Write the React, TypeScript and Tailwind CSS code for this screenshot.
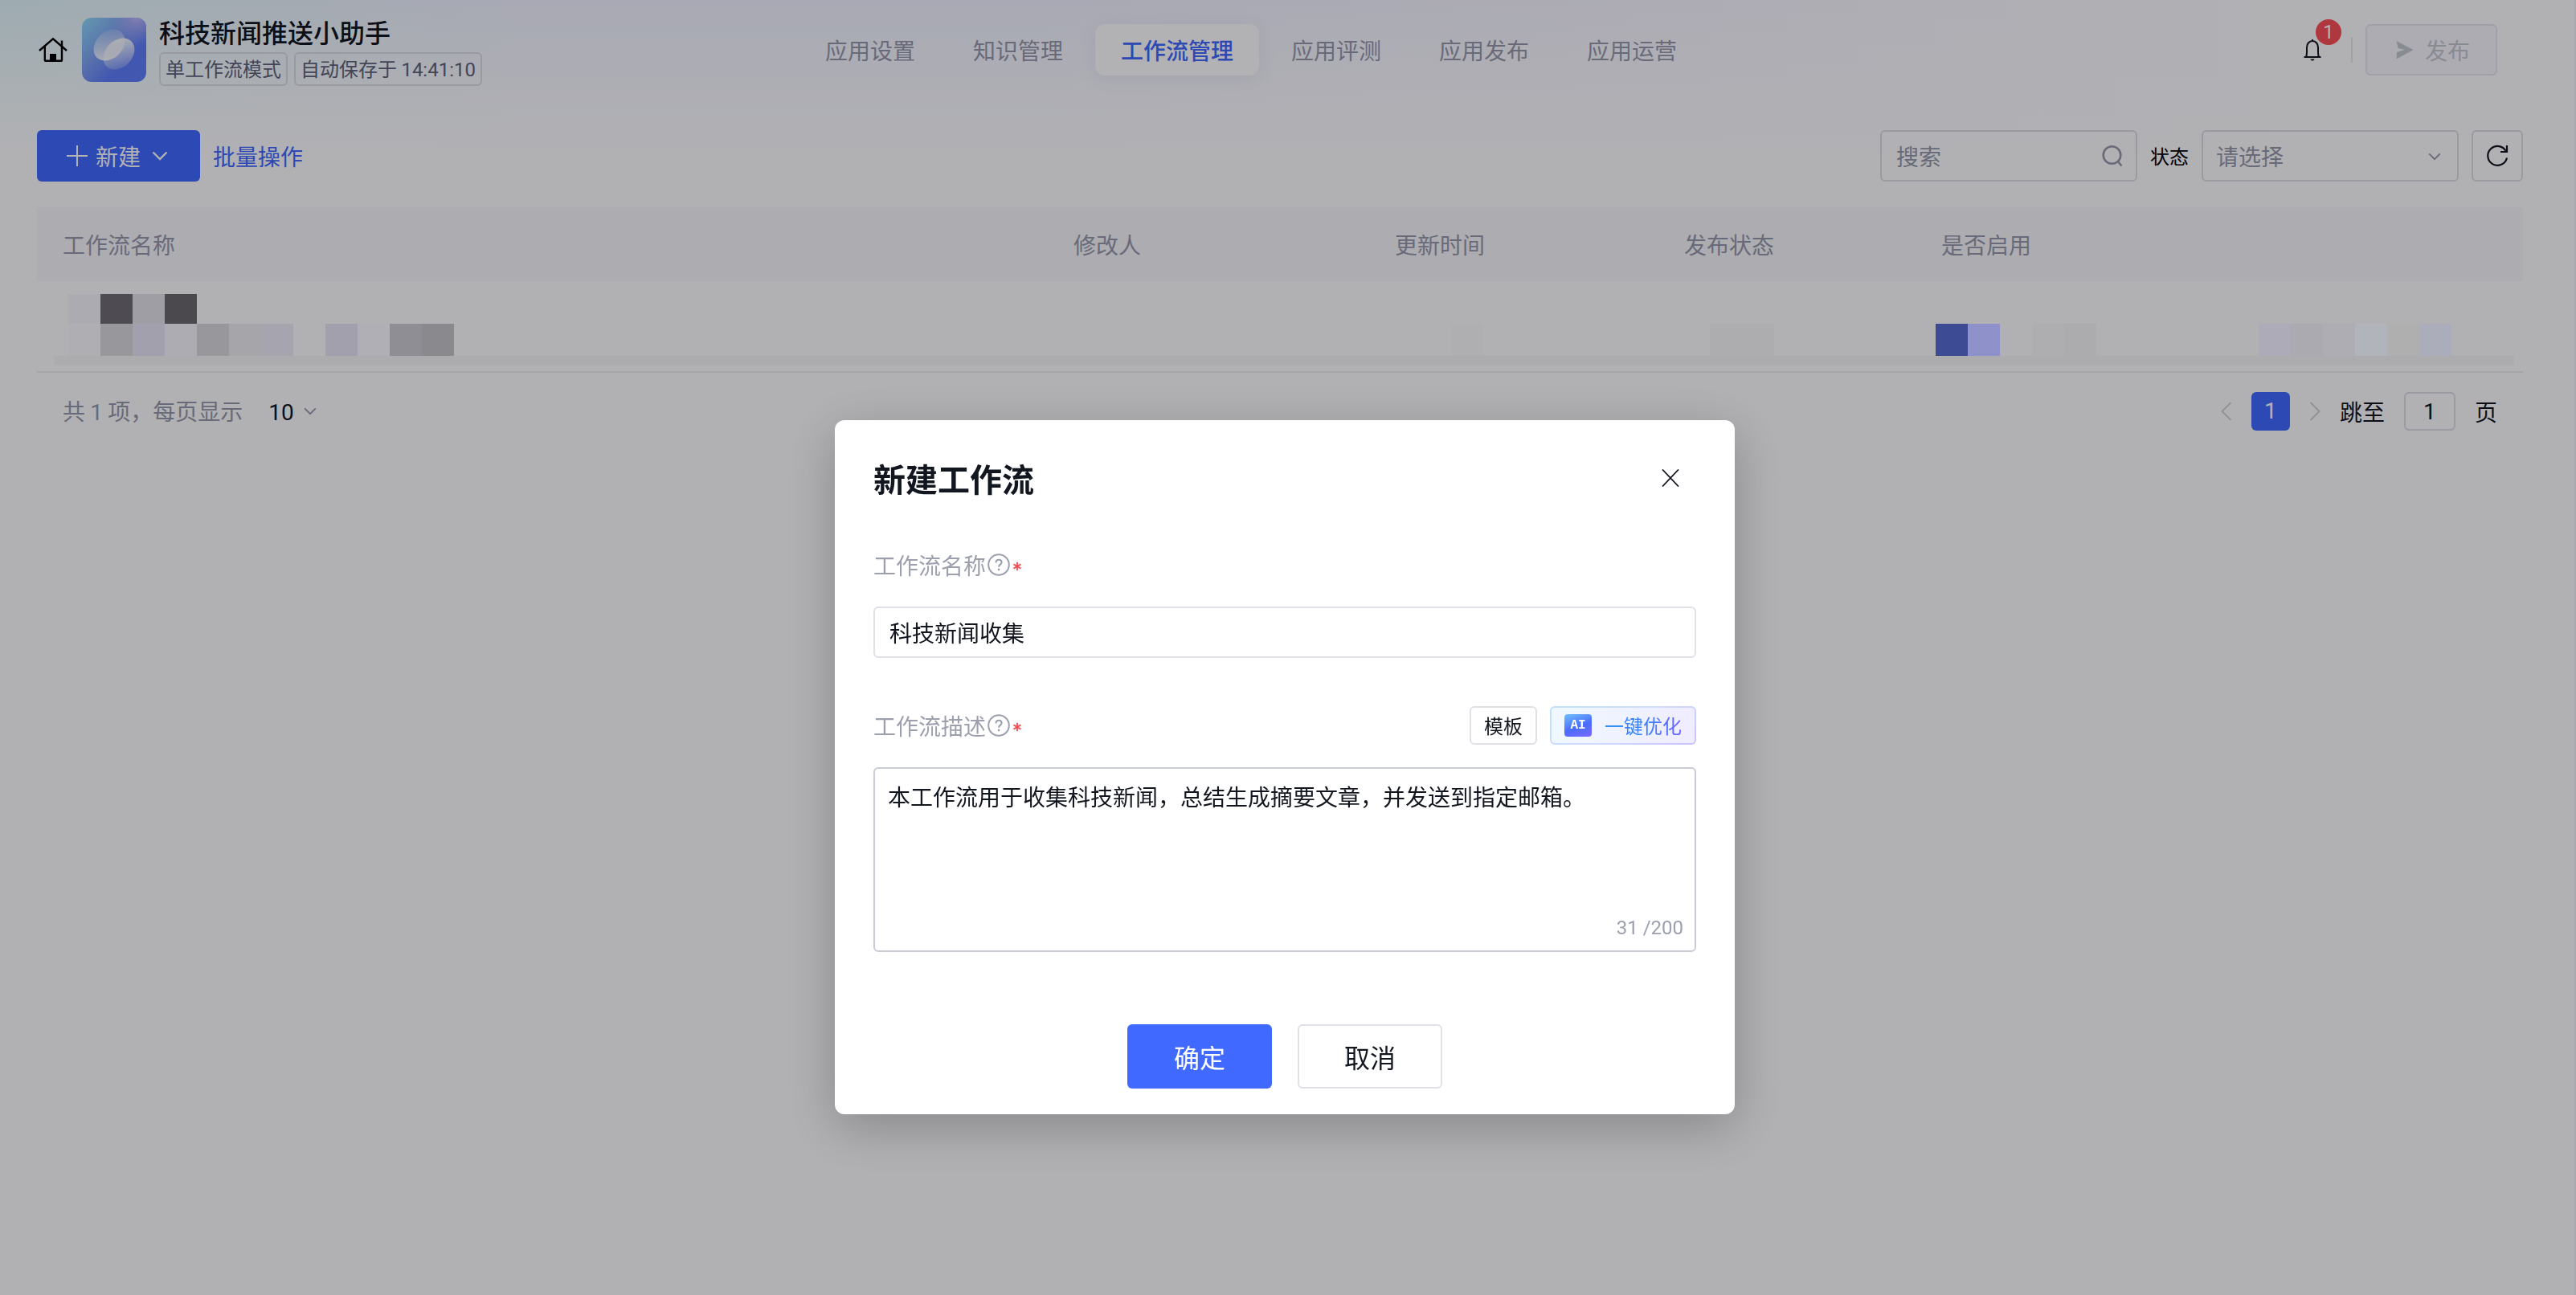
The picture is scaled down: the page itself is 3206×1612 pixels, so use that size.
import { useState } from "react"
import { clsx } from "clsx"

const TABS = ["应用设置", "知识管理", "工作流管理", "应用评测", "应用发布", "应用运营"]

function HomeIcon() {
    return (
        <svg width="36" height="32" viewBox="0 0 36 32" fill="none" stroke="currentColor" strokeWidth="2.4" aria-hidden>
            <path d="M1 17 18 2.4 35 17" />
            <path d="M7.8 12v16.4c0 .8.6 1.4 1.4 1.4h18.4c.8 0 1.4-.6 1.4-1.4V4.4" />
            <path d="M14 21h8v9h-8z" fill="currentColor" stroke="none" />
        </svg>
    )
}

function AppLogo() {
    return (
        <svg width="80" height="80" viewBox="0 0 80 80" aria-hidden>
            <defs>
                <linearGradient id="logo-base" x1="0" y1="0" x2="1" y2="1">
                    <stop offset="0" stopColor="#8fdcf8" />
                    <stop offset="0.4" stopColor="#7fa2f3" />
                    <stop offset="0.68" stopColor="#5f7dfa" />
                    <stop offset="1" stopColor="#607ffb" />
                </linearGradient>
                <radialGradient id="logo-glow" cx="0.85" cy="0" r="0.45">
                    <stop offset="0" stopColor="#c8b8f8" stopOpacity="0.9" />
                    <stop offset="1" stopColor="#8f9cf6" stopOpacity="0" />
                </radialGradient>
                <linearGradient id="logo-back" x1="1" y1="0" x2="0" y2="1">
                    <stop offset="0.1" stopColor="#fff" stopOpacity="0.12" />
                    <stop offset="0.9" stopColor="#fff" stopOpacity="0.95" />
                </linearGradient>
                <linearGradient id="logo-front" x1="1" y1="0" x2="0" y2="1">
                    <stop offset="0.1" stopColor="#fff" stopOpacity="0.95" />
                    <stop offset="0.85" stopColor="#fff" stopOpacity="0.2" />
                </linearGradient>
            </defs>
            <rect width="80" height="80" rx="12" fill="url(#logo-base)" />
            <rect width="80" height="80" rx="12" fill="url(#logo-glow)" />
            <ellipse cx="34" cy="34" rx="22" ry="16.500" transform="rotate(-45 34 34)" fill="url(#logo-back)" />
            <ellipse cx="46" cy="45" rx="22" ry="16.500" transform="rotate(-45 46 45)" fill="url(#logo-front)" />
        </svg>
    )
}

function BellIcon() {
    return (
        <svg width="24" height="28" viewBox="0 0 24 28" fill="none" stroke="currentColor" strokeWidth="2" aria-hidden>
            <path d="M1.5 23h21" />
            <path d="M4 23c.8-1.600 1-3.500 1-6.500V11c0-4.600 3-8 7-8s7 3.400 7 8v5.500c0 3 .2 4.900 1 6.500" />
            <path d="M12 3V1" />
            <path d="M9.500 25.500h5c-.4 1.400-1.300 2-2.500 2s-2.100-.6-2.500-2z" fill="currentColor" stroke="none" />
        </svg>
    )
}

function SendIcon() {
    return (
        <svg width="22" height="24" viewBox="0 0 22 24" aria-hidden>
            <path d="M.5 1 21.500 12 .5 23.500l.5-8.500L11 12 2.500 10z" fill="currentColor" />
        </svg>
    )
}

function Chevron({ className }: { className?: string }) {
    return (
        <svg viewBox="0 0 20 12" fill="none" stroke="currentColor" strokeWidth="2.4" className={className} aria-hidden>
            <path d="m1.500 1.500 8.500 8.500 8.500-8.500" />
        </svg>
    )
}

function PageArrow({ flip }: { flip?: boolean }) {
    return (
        <svg width="14" height="24" viewBox="0 0 14 24" fill="none" stroke="currentColor" strokeWidth="2" className={clsx(flip && "-scale-x-100")} aria-hidden>
            <path d="M12.500 1 1.500 12l11 11" />
        </svg>
    )
}

function HelpIcon() {
    return (
        <svg width="28" height="32" viewBox="0 0 28 32" fill="none" stroke="currentColor" strokeWidth="2" className="ml-0.5" aria-hidden>
            <circle cx="14" cy="16" r="12.800" />
            <path d="M10.500 13.500c0-2.200 1.500-3.700 3.600-3.700s3.500 1.300 3.500 3.200c0 2.600-3.500 2.700-3.500 5.700" />
            <circle cx="14.100" cy="22" r="1.400" fill="currentColor" stroke="none" />
        </svg>
    )
}

function RequiredMark() {
    return (
        <svg width="10" height="12" viewBox="0 0 10 12" stroke="#f24f55" strokeWidth="1.800" className="ml-1 mt-1" aria-hidden>
            <path d="M5 .8v10.400M.5 3.400l9 5.200M.5 8.600l9-5.200" />
        </svg>
    )
}

// Masked cell content, kept above the dialog backdrop
function Mosaic({ colors, tall }: { colors: string[]; tall?: boolean }) {
    return (
        <div className="relative z-20 flex">
            {colors.map((c, i) => (
                <span key={i} className={clsx("w-10 shrink-0", tall ? "h-10" : "h-[37px]", c)} />
            ))}
        </div>
    )
}

function Header() {
    return (
        <header className="flex h-[124px] items-center pl-12 pr-24">
            <div className="flex flex-1 items-center">
                <a href="#" aria-label="首页" className="text-black">
                    <HomeIcon />
                </a>
                <span className="ml-[18px]">
                    <AppLogo />
                </span>
                <div className="ml-4">
                    <h1 className="text-[32px] font-medium leading-[44px]">科技新闻推送小助手</h1>
                    <div className="mt-1 flex gap-2 text-2xl leading-9 text-[#60647a]">
                        <span className="rounded-md border-2 border-[#dcdde4] px-1.5">单工作流模式</span>
                        <span className="rounded-md border-2 border-[#dcdde4] px-1.5">
                            自动保存于 <time className="font-[Roboto,sans-serif]">14:41:10</time>
                        </span>
                    </div>
                </div>
            </div>

            <nav className="mr-[42px] flex gap-2">
                {TABS.map((tab) => (
                    <a
                        key={tab}
                        href="#"
                        aria-current={tab === "工作流管理" ? "page" : undefined}
                        className={clsx(
                            "rounded-xl px-8 leading-[64px]",
                            tab === "工作流管理"
                                ? "bg-white font-medium text-[#4069ff] shadow-[0_4px_24px_rgba(60,60,140,0.08)]"
                                : "text-[#9799ab]"
                        )}
                    >
                        {tab}
                    </a>
                ))}
            </nav>

            <div className="flex flex-1 items-center justify-end">
                <button type="button" aria-label="通知" className="relative">
                    <BellIcon />
                    <span className="absolute -top-6 left-4 size-8 rounded-full bg-[#fb4f57] text-center font-[Roboto,sans-serif] text-2xl leading-8 text-white">1</span>
                </button>
                <span className="ml-9 mr-4 h-8 w-0.5 bg-[#e6e6ec]" />
                <button type="button" disabled className="flex h-16 w-[164px] items-center justify-center gap-3.5 rounded-md border-2 border-[#e6e5ee] bg-[#f7f6fd] pl-1 text-[#c4c7d0]">
                    <SendIcon />
                    发布
                </button>
            </div>
        </header>
    )
}

function Toolbar() {
    return (
        <div className="flex items-center justify-between">
            <div className="flex items-center gap-4">
                <button type="button" className="flex h-16 items-center rounded-md bg-[#4069ff] pl-[37px] pr-10 text-white">
                    <svg width="26" height="28" viewBox="0 0 26 28" stroke="currentColor" strokeWidth="2" aria-hidden>
                        <path d="M0 14h26M13 1v26" />
                    </svg>
                    <span className="ml-2.5">新建</span>
                    <Chevron className="ml-3.5 h-3 w-5" />
                </button>
                <button type="button" className="text-[#4069ff]">批量操作</button>
            </div>

            <div className="flex items-center gap-4">
                <div className="relative">
                    <input
                        type="search"
                        aria-label="搜索"
                        placeholder="搜索"
                        className="h-16 w-80 rounded-md border-2 border-[#dcdde6] pl-[18px] pr-16 placeholder:text-[#9799ab]"
                    />
                    <svg width="26" height="28" viewBox="0 0 26 28" fill="none" stroke="currentColor" strokeWidth="2.600" className="absolute right-[18px] top-[18px] text-[#9799ab]" aria-hidden>
                        <circle cx="12.500" cy="13" r="10.800" />
                        <path d="m19.500 20.500 5 6" />
                    </svg>
                </div>
                <label htmlFor="status" className="text-2xl text-black">状态</label>
                <div className="relative">
                    <select id="status" defaultValue="" className="h-16 w-80 appearance-none rounded-md border-2 border-[#dcdde6] px-4 text-[#9799ab]">
                        <option value="">请选择</option>
                        <option value="published">已发布</option>
                    </select>
                    <Chevron className="pointer-events-none absolute right-[22px] top-7 h-[10px] w-4 text-[#9799ab]" />
                </div>
                <button type="button" aria-label="刷新" className="flex size-16 items-center justify-center rounded-md border-2 border-[#dcdde6]">
                    <svg width="28" height="28" viewBox="0 0 28 28" fill="none" stroke="currentColor" strokeWidth="2.200" aria-hidden>
                        <path d="M26 16.500A12 12 0 1 1 25 8.500" />
                        <path d="M26 1v8h-8" />
                    </svg>
                </button>
            </div>
        </div>
    )
}

function WorkflowTable() {
    return (
        <table className="mt-8 w-full table-fixed border-collapse text-left">
            <thead>
                <tr className="h-[92px] bg-[#f6f7fb] text-[#9799ab]">
                    <th className="pl-8 font-normal">工作流名称</th>
                    <th className="w-[400px] pl-8 font-normal">修改人</th>
                    <th className="w-[360px] pl-8 font-normal">更新时间</th>
                    <th className="w-[320px] pl-8 font-normal">发布状态</th>
                    <th className="w-[320px] pl-8 font-normal">是否启用</th>
                    <th className="w-[436px]" aria-label="操作" />
                </tr>
            </thead>
            <tbody>
                <tr className="h-[93px] align-bottom">
                    <td className="pl-[39px]">
                        <Mosaic colors={["bg-[#acabb2]", "bg-[#4e4c52]", "bg-[#9f9ea4]", "bg-[#4b494e]"]} />
                        <Mosaic
                            tall
                            colors={[
                                "bg-[#afaeb3]", "bg-[#98979c]", "bg-[#a1a0ac]", "bg-[#acacb2]", "bg-[#98979c]", "bg-[#a5a5aa]", "bg-[#a5a4af]",
                                "bg-transparent", "bg-[#a1a0ac]", "bg-[#b0afb6]", "bg-[#8f8e94]", "bg-[#8a898d]",
                            ]}
                        />
                    </td>
                    <td />
                    <td className="pl-[102px]">
                        <Mosaic tall colors={["bg-[#afafb1]"]} />
                    </td>
                    <td className="pl-16">
                        <Mosaic tall colors={["bg-[#adadaf]", "bg-[#adadaf]"]} />
                    </td>
                    <td className="pl-[25px]">
                        <Mosaic tall colors={["bg-[#3c4b94]", "bg-[#8f92ca]", "bg-[#b1b1b3]", "bg-[#aeaeb0]", "bg-[#acacae]"]} />
                    </td>
                    <td className="pl-[107px]">
                        <Mosaic tall colors={["bg-[#adabb8]", "bg-[#abaab0]", "bg-[#aeadb4]", "bg-[#b2b4bb]", "bg-[#afafaf]", "bg-[#abaeba]"]} />
                    </td>
                </tr>
                <tr className="border-b-2 border-[#ececee]">
                    <td colSpan={6} className="pb-2 pl-[21px] pr-[11px]">
                        <div className="h-[11px] bg-[#f7f7f8]" />
                    </td>
                </tr>
            </tbody>
        </table>
    )
}

function Pagination() {
    return (
        <div className="mt-6 flex h-12 items-center justify-between px-8">
            <div className="flex items-center text-[#9799ab]">
                <label htmlFor="page-size">
                    共 <span className="font-[Roboto,sans-serif]">1</span> 项，每页显示
                </label>
                <div className="relative ml-8">
                    <select id="page-size" defaultValue="10" className="w-16 appearance-none font-[Roboto,sans-serif] text-[#12161f]">
                        <option value="10">10</option>
                        <option value="20">20</option>
                    </select>
                    <Chevron className="pointer-events-none absolute right-1 top-4 h-[10px] w-4" />
                </div>
            </div>

            <div className="flex items-center">
                <button type="button" aria-label="上一页" className="text-[#d0d0d8]">
                    <PageArrow />
                </button>
                <button type="button" aria-current="page" className="ml-6 size-12 rounded-md bg-[#4069ff] font-[Roboto,sans-serif] text-white">1</button>
                <button type="button" aria-label="下一页" className="ml-6 text-[#d0d0d8]">
                    <PageArrow flip />
                </button>
                <label htmlFor="page-jump" className="ml-6">跳至</label>
                <input id="page-jump" type="text" defaultValue="1" className="mx-6 h-12 w-16 rounded-md border-2 border-[#dcdde6] text-center font-[Roboto,sans-serif]" />
                <span>页</span>
            </div>
        </div>
    )
}

function CreateDialog() {
    const [name, setName] = useState("科技新闻收集")
    const [desc, setDesc] = useState("本工作流用于收集科技新闻，总结生成摘要文章，并发送到指定邮箱。")

    return (
        <div className="fixed inset-0 z-10 flex items-start justify-center bg-[rgba(0,0,6,0.3)] pr-2 pt-[523px]">
            <form
                role="dialog"
                aria-modal="true"
                aria-labelledby="dialog-title"
                onSubmit={(e) => e.preventDefault()}
                className="w-[1120px] rounded-xl bg-white px-12 pb-8 pt-10 shadow-[0_16px_64px_rgba(0,0,0,0.24)]"
            >
                <div className="flex items-center justify-between">
                    <h2 id="dialog-title" className="text-[40px] font-bold leading-[64px]">新建工作流</h2>
                    <button type="button" aria-label="关闭" className="flex size-16 items-center justify-center">
                        <svg width="22" height="22" viewBox="0 0 22 22" stroke="currentColor" strokeWidth="1.800" aria-hidden>
                            <path d="m1 0.500 20 21M21 0.500l-20 21" />
                        </svg>
                    </button>
                </div>

                <div className="mt-[52px] flex h-12 items-center text-[#9c9fae]">
                    <label htmlFor="wf-name">工作流名称</label>
                    <HelpIcon />
                    <RequiredMark />
                </div>
                <input
                    id="wf-name"
                    type="text"
                    required
                    value={name}
                    onChange={(e) => setName(e.target.value)}
                    className="mt-7 h-16 w-full rounded-md border-2 border-[#e0e1e6] px-[18px]"
                />

                <div className="mt-[60px] flex h-12 items-center text-[#9c9fae]">
                    <label htmlFor="wf-desc">工作流描述</label>
                    <HelpIcon />
                    <RequiredMark />
                    <button type="button" className="ml-auto h-12 rounded-md border-2 border-[#e0e1e6] px-4 text-2xl text-[#12161f]">模板</button>
                    <button
                        type="button"
                        className="ml-4 flex h-12 items-center gap-4 rounded-md border-2 border-transparent px-4 text-2xl [background:linear-gradient(100deg,#f0f8ff,#efecff)_padding-box,linear-gradient(150deg,#bfe0ff,#cfdcff_50%,#c9c2ff)_border-box]"
                    >
                        <span className="flex h-7 w-[34px] items-center justify-center rounded bg-[linear-gradient(160deg,#6fc0ff,#4a6cff_55%,#7a6bff)] font-['Liberation_Mono',monospace] text-base font-bold text-white">
                            AI
                        </span>
                        <span className="bg-[linear-gradient(90deg,#2b8dff,#3f7bff_60%,#6a62ff)] bg-clip-text text-transparent">一键优化</span>
                    </button>
                </div>
                <div className="relative mt-7">
                    <textarea
                        id="wf-desc"
                        required
                        maxLength={200}
                        value={desc}
                        onChange={(e) => setDesc(e.target.value)}
                        className="block h-[230px] w-full resize-none rounded-md border-2 border-[#c9ccd4] px-4 py-3 leading-[44px]"
                    />
                    <span className="absolute bottom-[14px] right-4 font-[Roboto,sans-serif] text-2xl text-[#9c9fae]">{desc.length} /200</span>
                </div>

                <div className="mt-[90px] flex justify-center gap-8 text-[32px]">
                    <button type="submit" className="h-20 w-[180px] rounded-md bg-[#4069ff] text-white">确定</button>
                    <button type="button" className="h-20 w-[180px] rounded-md border-2 border-[#e0e1e6]">取消</button>
                </div>
            </form>
        </div>
    )
}

export default function App() {
    return (
        <div className="min-h-screen border-r-2 border-[#f2f2f8] bg-[#fefeff] bg-[linear-gradient(to_bottom,transparent,#fefeff),linear-gradient(to_right,#e2f6fb,#f1f3ff_20%,#f1f3ff_40%,#f8f6ff_65%,#fefeff_88%)] bg-[length:100%_190px] bg-no-repeat font-['Noto_Sans_CJK_SC',sans-serif] text-[28px] leading-[40px] text-[#12161f]">
            <Header />
            <main className="pl-[46px] pr-16 pt-[38px]">
                <Toolbar />
                <WorkflowTable />
                <Pagination />
            </main>
            <CreateDialog />
        </div>
    )
}
